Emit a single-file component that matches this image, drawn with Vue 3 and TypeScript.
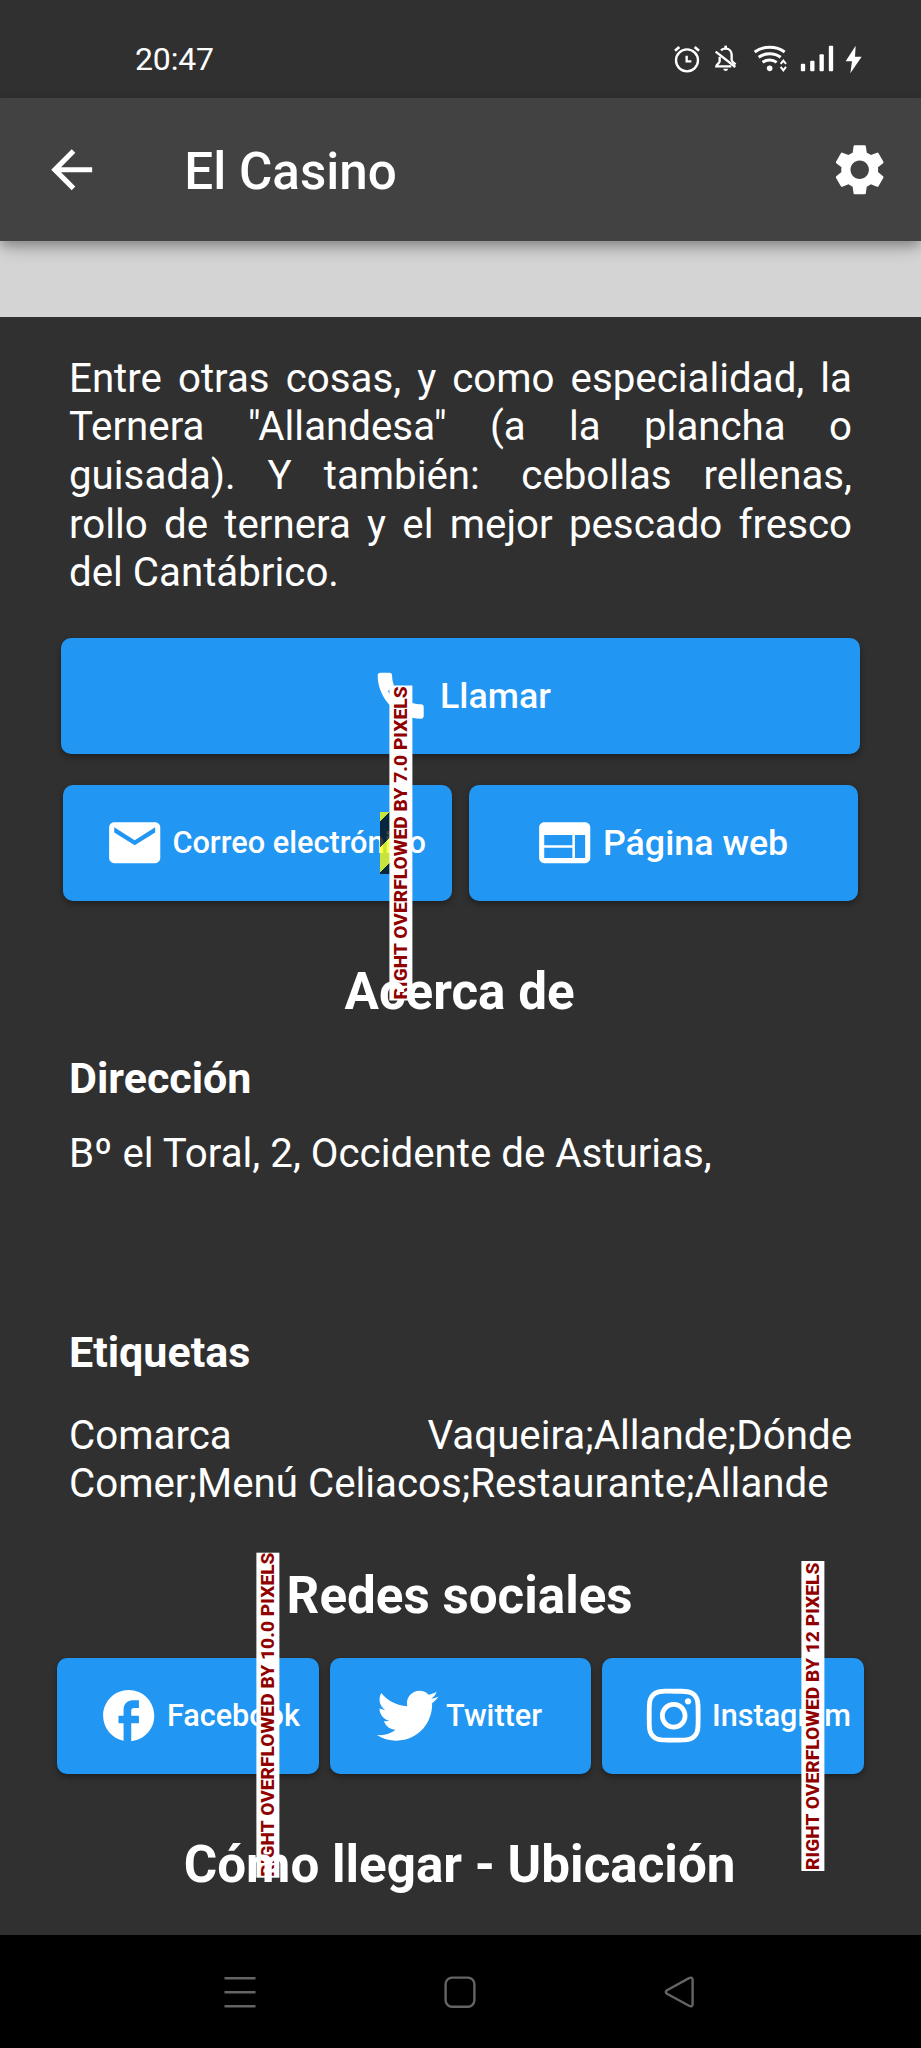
<script setup lang="ts">
interface Social {
  id: string
  label: string
  viewBox: string
  path: string
  warning?: string
}

const phonePath =
  'M20.01 15.38c-1.23 0-2.42-.2-3.53-.56-.35-.12-.74-.03-1.01.24l-1.57 1.97c-2.83-1.35-5.48-3.9-6.89-6.83l1.95-1.66c.27-.28.35-.67.24-1.02-.37-1.11-.56-2.3-.56-3.53 0-.54-.45-.99-.99-.99H4.19C3.65 3 3 3.24 3 3.99 3 13.28 10.73 21 20.01 21c.71 0 .99-.63.99-1.18v-3.45c0-.54-.45-.99-.99-.99z'
const mailPath =
  'M20 4H4c-1.1 0-1.99.9-1.99 2L2 18c0 1.1.9 2 2 2h16c1.1 0 2-.9 2-2V6c0-1.1-.9-2-2-2zm0 4l-8 5-8-5V6l8 5 8-5v2z'
const webPath =
  'M20 4H4c-1.1 0-1.99.9-1.99 2L2 18c0 1.1.9 2 2 2h16c1.1 0 2-.9 2-2V6c0-1.1-.9-2-2-2zm-5 14H4v-4h11v4zm0-5H4V9h11v4zm5 5h-4V9h4v9z'
const gearPath =
  'M19.14 12.94c.04-.3.06-.61.06-.94 0-.32-.02-.64-.07-.94l2.03-1.58c.18-.14.23-.41.12-.61l-1.92-3.32c-.12-.22-.37-.29-.59-.22l-2.39.96c-.5-.38-1.03-.7-1.62-.94l-.36-2.54c-.04-.24-.24-.41-.48-.41h-3.84c-.24 0-.43.17-.47.41l-.36 2.54c-.59.24-1.13.57-1.62.94l-2.39-.96c-.22-.08-.47 0-.59.22L2.74 8.87c-.12.21-.08.47.12.61l2.03 1.58c-.05.3-.09.63-.09.94s.02.64.07.94l-2.03 1.58c-.18.14-.23.41-.12.61l1.92 3.32c.12.22.37.29.59.22l2.39-.96c.5.38 1.03.7 1.62.94l.36 2.54c.05.24.24.41.48.41h3.84c.24 0 .44-.17.47-.41l.36-2.54c.59-.24 1.13-.56 1.62-.94l2.39.96c.22.08.47 0 .59-.22l1.92-3.32c.12-.22.07-.47-.12-.61l-2.01-1.58zM12 15.6c-1.98 0-3.6-1.62-3.6-3.6s1.62-3.6 3.6-3.6 3.6 1.62 3.6 3.6-1.62 3.6-3.6 3.6z'

const socials: Social[] = [
  {
    id: 'facebook',
    label: 'Facebook',
    viewBox: '0 0 24 24',
    path: 'M22 12c0-5.52-4.48-10-10-10S2 6.48 2 12c0 4.84 3.44 8.87 8 9.8V15H8v-3h2V9.5C10 7.57 11.57 6 13.5 6H16v3h-2c-.55 0-1 .45-1 1v2h3v3h-3v6.95c5.05-.5 9-4.76 9-9.95z',
    warning: 'RIGHT OVERFLOWED BY 10.0 PIXELS',
  },
  {
    id: 'twitter',
    label: 'Twitter',
    viewBox: '0 0 512 512',
    path: 'M459.37 151.716c.325 4.548.325 9.097.325 13.645 0 138.72-105.583 298.558-298.558 298.558-59.452 0-114.68-17.219-161.137-47.106 8.447.974 16.568 1.299 25.34 1.299 49.055 0 94.213-16.568 130.274-44.832-46.132-.975-84.792-31.188-98.112-72.772 6.498.974 12.995 1.624 19.818 1.624 9.421 0 18.843-1.3 27.614-3.573-48.081-9.747-84.143-51.98-84.143-102.985v-1.299c13.969 7.797 30.214 12.67 47.431 13.319-28.264-18.843-46.781-51.005-46.781-87.391 0-19.492 5.197-37.36 14.294-52.954 51.655 63.675 129.3 105.258 216.365 109.807-1.624-7.797-2.599-15.918-2.599-24.04 0-57.828 46.782-104.934 104.934-104.934 30.213 0 57.502 12.67 76.67 33.137 23.715-4.548 46.456-13.32 66.599-25.34-7.798 24.366-24.366 44.833-46.132 57.827 21.117-2.273 41.584-8.122 60.426-16.243-14.292 20.791-32.161 39.308-52.628 54.253z',
  },
  {
    id: 'instagram',
    label: 'Instagram',
    viewBox: '-32 0 512 512',
    path: 'M224.1 141c-63.6 0-114.9 51.3-114.9 114.9s51.3 114.9 114.9 114.9S339 319.5 339 255.9 287.7 141 224.1 141zm0 189.6c-41.1 0-74.7-33.5-74.7-74.7s33.5-74.7 74.7-74.7 74.7 33.5 74.7 74.7-33.6 74.7-74.7 74.7zm146.4-194.3c0 14.9-12 26.8-26.8 26.8-14.9 0-26.8-12-26.8-26.8s12-26.8 26.8-26.8 26.8 12 26.8 26.8zm76.1 27.2c-1.7-35.9-9.9-67.7-36.2-93.9-26.2-26.2-58-34.4-93.9-36.2-37-2.1-147.9-2.1-184.9 0-35.8 1.7-67.6 9.9-93.9 36.1s-34.4 58-36.2 93.9c-2.1 37-2.1 147.9 0 184.9 1.7 35.9 9.9 67.7 36.2 93.9s58 34.4 93.9 36.2c37 2.1 147.9 2.1 184.9 0 35.9-1.7 67.7-9.9 93.9-36.2 26.2-26.2 34.4-58 36.2-93.9 2.1-37 2.1-147.8 0-184.8zM398.8 388c-7.8 19.6-22.9 34.7-42.6 42.6-29.5 11.7-99.5 9-132.1 9s-102.7 2.6-132.1-9c-19.6-7.8-34.7-22.9-42.6-42.6-11.7-29.5-9-99.5-9-132.1s-2.6-102.7 9-132.1c7.8-19.6 22.9-34.7 42.6-42.6 29.5-11.7 99.5-9 132.1-9s102.7-2.6 132.1 9c19.6 7.8 34.7 22.9 42.6 42.6 11.7 29.5 9 99.5 9 132.1s2.7 102.7-9 132.1z',
    warning: 'RIGHT OVERFLOWED BY 12 PIXELS',
  },
]
</script>

<template>
  <div class="screen">
    <div class="status-bar">
      <span class="clock">20:47</span>
      <div class="status-icons">
        <svg class="alarm" viewBox="25 25 83 95" fill="none" stroke="#fff">
          <circle cx="67" cy="77" r="33" stroke-width="7" />
          <path d="M66 63v17h14" stroke-width="7" />
          <path d="M31 48l13-11M103 48L90 37" stroke-width="8" />
        </svg>
        <svg class="bell" viewBox="143 25 74 95" fill="none" stroke="#fff" stroke-width="7">
          <path d="M167 47c4-4 8-5 14-5 11 0 18 8 18 19v14c0 5 5 9 12 14" />
          <path d="M181 33v9" stroke-width="8" />
          <path d="M163 66v14c0 6-9 8-10 15h45" />
          <path d="M151 51l59 46" />
          <path d="M174 102h14c-1 9-13 9-14 0z" fill="#fff" stroke="none" />
        </svg>
        <svg class="wifi" viewBox="260 25 110 95" fill="none" stroke="#fff">
          <path d="M268 52c26-19 64-19 90 0M280 68c19-14 47-14 66 0M292 83c12-9 30-9 42 0" stroke-width="9" />
          <circle cx="313" cy="101" r="8.5" fill="#fff" stroke="none" />
          <path d="M346 88l8-10 8 10M346 97l8 10 8-10" stroke-width="6" />
        </svg>
        <svg class="signal" viewBox="402 25 110 95" fill="#fff">
          <rect x="407.5" y="87" width="13" height="23" rx="3" />
          <rect x="435.5" y="78" width="13" height="32" rx="3" />
          <rect x="463.5" y="59" width="13" height="51" rx="3" />
          <rect x="491.5" y="33" width="13" height="77" rx="3" />
        </svg>
        <svg class="bolt" viewBox="538 25 57 95" fill="#fff">
          <path d="M573 33L543 80h19l-5 36 34-50h-20z" />
        </svg>
      </div>
    </div>

    <header class="app-bar">
      <svg class="icon" viewBox="0 0 24 24"><path d="M20 11H7.83l5.59-5.59L12 4l-8 8 8 8 1.41-1.41L7.83 13H20v-2z" /></svg>
      <h1 class="title">El Casino</h1>
      <svg class="icon" viewBox="0 0 24 24"><path :d="gearPath" /></svg>
    </header>
    <div class="banner"></div>

    <main class="content">
      <p class="text intro">
        Entre otras cosas, y como especialidad, la Ternera "Allandesa" (a la plancha o guisada). Y <span class="wide">también:</span> cebollas rellenas, rollo de ternera y el mejor pescado fresco del Cantábrico.
      </p>

      <div class="button call">
        <svg class="icon" viewBox="0 0 24 24"><path :d="phonePath" /></svg>
        <span>Llamar</span>
      </div>

      <div class="contact-row">
        <div class="button mail">
          <svg class="icon" viewBox="0 0 24 24"><path :d="mailPath" /></svg>
          <span>Correo electrónico</span>
          <i class="hazard"></i>
          <b class="overflow mail-overflow">RIGHT OVERFLOWED BY 7.0 PIXELS</b>
        </div>
        <div class="button web">
          <svg class="icon" viewBox="0 0 24 24"><path :d="webPath" /></svg>
          <span>Página web</span>
        </div>
      </div>

      <h2 class="heading about">Acerca de</h2>
      <h3 class="label address-label">Dirección</h3>
      <p class="text address">Bº el Toral, 2, Occidente de Asturias,</p>
      <h3 class="label tags-label">Etiquetas</h3>
      <p class="text tags">Comarca Vaqueira;Allande;Dónde Comer;Menú Celiacos;Restaurante;Allande</p>

      <h2 class="heading networks">Redes sociales</h2>
      <div class="social-row">
        <div v-for="s in socials" :key="s.id" class="button social" :class="s.id">
          <svg class="icon" :viewBox="s.viewBox"><path :d="s.path" /></svg>
          <span>{{ s.label }}</span>
          <b v-if="s.warning" class="overflow" :class="`${s.id}-overflow`">{{ s.warning }}</b>
        </div>
      </div>
      <h2 class="heading location">Cómo llegar - Ubicación</h2>
    </main>

    <nav class="nav-bar">
      <svg viewBox="0 0 34 34"><path d="M1.5 3.2h31M1.5 17.2h31M1.5 31.2h31" /></svg>
      <svg viewBox="0 0 34 34"><rect x="2.6" y="2.6" width="28.8" height="29.2" rx="6.5" /></svg>
      <svg viewBox="0 0 34 34"><path d="M4 15.2L26 3.2Q29.6 1.6 29.6 5v24Q29.6 32.6 26 30.8L4 18.8Q1.6 17 4 15.2z" /></svg>
    </nav>
  </div>
</template>

<style>
body {
  margin: 0;
  background: #303030;
}
</style>

<style scoped>
.screen {
  display: flex;
  flex-direction: column;
  width: 921px;
  height: 2048px;
  overflow: hidden;
  background: #303030;
  color: #fff;
  font-family: Roboto, "Liberation Sans", sans-serif;
}
h1,
h2,
h3,
p {
  margin: 0;
}
svg {
  display: block;
  flex: none;
}
.status-bar {
  display: flex;
  justify-content: space-between;
  flex: none;
  height: 97.5px;
  padding: 0 57.7px 0 135px;
  box-sizing: border-box;
}
.clock {
  margin-top: 38.5px;
  font-size: 32px;
  line-height: 40px;
  letter-spacing: -0.15px;
}
.status-icons {
  display: flex;
  margin-top: 43.3px;
}
.status-icons svg {
  height: 31.67px;
}
.alarm {
  width: 27.67px;
}
.bell {
  width: 24.67px;
  margin-left: 11.67px;
}
.wifi {
  width: 36.67px;
  margin-left: 14.33px;
}
.signal {
  width: 36.67px;
  margin-left: 10.67px;
}
.bolt {
  width: 19px;
  margin-left: 8.67px;
}
.icon {
  width: 61.4px;
  height: 61.4px;
  fill: #fff;
}
.app-bar {
  position: relative;
  z-index: 1;
  display: flex;
  flex: none;
  align-items: center;
  height: 143.5px;
  padding: 1px 30.3px 0 40.8px;
  box-sizing: border-box;
  background: #424242;
  box-shadow: 0 5px 10px rgba(0, 0, 0, 0.22), 0 9px 18px -3px rgba(0, 0, 0, 0.2);
}
.title {
  flex: 1;
  margin-left: 82.1px;
  padding-top: 4px;
  font-size: 51.16px;
  font-weight: 500;
  line-height: 60px;
}
.banner {
  flex: none;
  height: 76.3px;
  background: #d4d4d4;
}
.content {
  flex: 1;
}
.text {
  padding: 0 69px;
  font-size: 40.27px;
  line-height: 48.65px;
  text-align: justify;
}
.intro {
  margin-top: 37.3px;
}
.wide {
  padding-right: 9.5px;
}
.button {
  position: relative;
  display: flex;
  align-items: center;
  box-sizing: border-box;
  height: 115.8px;
  padding-left: 41px;
  border-radius: 10px;
  background: #2196f3;
  box-shadow: 0 3px 6px rgba(0, 0, 0, 0.35);
  font-size: 35.8px;
  font-weight: 500;
  white-space: nowrap;
}
.button span {
  margin-left: 7.5px;
}
.call {
  justify-content: center;
  margin: 40.3px 61px 0;
  padding-left: 0;
}
.button.call span {
  margin-left: 8.5px;
}
.contact-row {
  display: grid;
  grid-template-columns: repeat(2, minmax(0, 1fr));
  gap: 17px;
  margin: 31px 63px 0;
}
.mail {
  font-size: 30.7px;
}
.button.mail span {
  margin-left: 7px;
}
.web {
  padding-left: 65px;
}
.hazard {
  position: absolute;
  top: 27.3px;
  left: 317px;
  width: 30px;
  height: 61.4px;
  background: linear-gradient(
    135deg,
    rgba(255, 255, 0, 0.75) 6.5px,
    rgba(0, 0, 0, 0.75) 6.5px 25px,
    rgba(255, 255, 0, 0.75) 25px 43px,
    rgba(0, 0, 0, 0.75) 43px
  );
}
.overflow {
  position: absolute;
  z-index: 1;
  box-sizing: border-box;
  width: 23.4px;
  padding-top: 0.5px;
  background: #fff;
  color: #900000;
  font-size: 19.18px;
  font-weight: 800;
  letter-spacing: 0.03px;
  line-height: 23.4px;
  writing-mode: vertical-rl;
  transform: rotate(180deg);
}
.mail-overflow {
  top: -99.3px;
  left: 326.3px;
  height: 314.5px;
}
.facebook-overflow {
  top: -105px;
  left: 198.7px;
  height: 324.7px;
}
.instagram-overflow {
  top: -97.3px;
  left: 198.7px;
  height: 310px;
}
.heading {
  position: relative;
  z-index: 2;
  padding-right: 1.8px;
  font-size: 51.16px;
  font-weight: 700;
  line-height: 60px;
  text-align: center;
}
.about {
  margin-top: 60.9px;
}
.label {
  padding-left: 69px;
  font-size: 43px;
  font-weight: 700;
  line-height: 50px;
}
.address-label {
  margin-top: 31.2px;
}
.address {
  margin-top: 27.3px;
}
.tags-label {
  margin-top: 148.1px;
}
.tags {
  margin-top: 34.9px;
}
.networks {
  margin-top: 57px;
}
.social-row {
  display: grid;
  grid-template-columns: repeat(3, minmax(0, 1fr));
  gap: 11.3px;
  margin: 32px 57.3px 0;
}
.social {
  font-size: 30.6px;
}
.button.social span {
  margin-left: 7.2px;
}
.social.twitter {
  padding-left: 47.6px;
}
.location {
  margin-top: 60.8px;
}
.nav-bar {
  position: relative;
  z-index: 3;
  display: flex;
  flex: none;
  align-items: flex-start;
  justify-content: space-between;
  height: 112.7px;
  padding: 39.3px 223.8px 0 223.2px;
  box-sizing: border-box;
  background: #000;
}
.nav-bar svg {
  width: 34px;
  height: 34px;
  fill: none;
  stroke: #646464;
  stroke-width: 2.4;
}
</style>
